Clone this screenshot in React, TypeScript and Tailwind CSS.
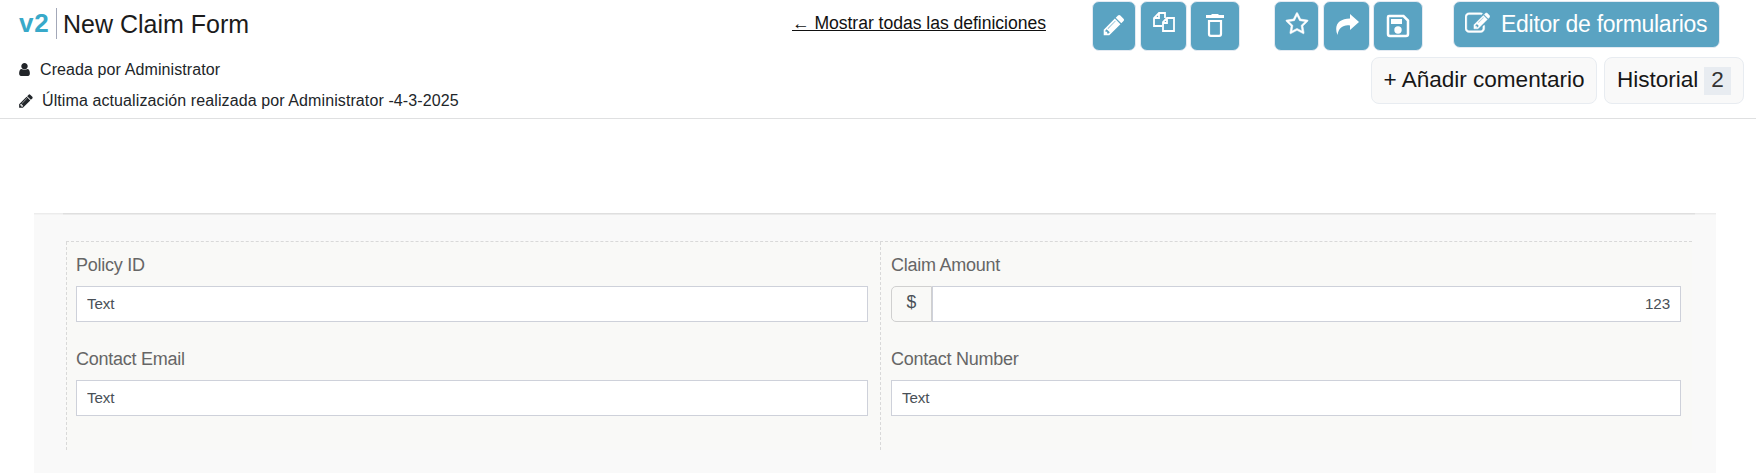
import type { ReactNode } from 'react';

const PENCIL =
  'M491 1536l91-91-235-235-91 91v107h128v128h107zm523-928q0-22-22-22-10 0-17 7l-542 542q-7 7-7 17 0 22 22 22 10 0 17-7l542-542q7-7 7-17zm-54-192l416 416-832 832h-416v-416zm683 96q0 53-37 90l-166 166-416-416 166-165q36-38 90-38 53 0 91 38l235 234q37 39 37 91z';
const USER =
  'M1536 1399q0 109-62.5 187t-150.5 78h-854q-88 0-150.5-78t-62.5-187q0-85 8.5-160.5t31.5-152 58.5-131 94-89 134.5-34.5q131 128 313 128t313-128q76 0 134.5 34.5t94 89 58.5 131 31.5 152 8.5 160.5zm-256-887q0 159-112.5 271.5t-271.5 112.5-271.5-112.5-112.5-271.5 112.5-271.5 271.5-112.5 271.5 112.5 112.5 271.5z';
const STAR =
  'M1201 1004l306-297-422-62-189-382-189 382-422 62 306 297-73 421 378-199 377 199zm527-357q0 22-26 48l-363 354 86 500q1 7 1 20 0 50-41 50-19 0-40-12l-449-236-449 236q-22 12-40 12-21 0-31.5-14.5t-10.5-35.5q0-6 2-20l86-500-364-354q-25-27-25-48 0-37 56-46l502-73 225-455q19-41 49-41t49 41l225 455 502 73q56 9 56 46z';
const EDIT =
  'M888 1184l116-116-152-152-116 116v56h96v96h56zm440-720q-16-16-33 1l-350 350q-17 17-1 33t33-1l350-350q17-17 1-33zm80 594v190q0 119-84.5 203.5t-203.5 84.5h-832q-119 0-203.5-84.5t-84.5-203.5v-832q0-119 84.5-203.5t203.5-84.5h832q63 0 117 25 15 7 18 23 3 17-9 29l-49 49q-14 14-32 8-23-6-45-6h-832q-66 0-113 47t-47 113v832q0 66 47 113t113 47h832q66 0 113-47t47-113v-126q0-13 9-22l64-64q15-15 35-7t20 29zm-96-738l288 288-672 672h-288v-288zm444 132l-92 92-288-288 92-92q28-28 68-28t68 28l152 152q28 28 28 68t-28 68z';

function Glyph({ d, className }: { d: string; className: string }) {
  return (
    <svg viewBox="0 0 1792 1792" fill="currentColor" className={className}>
      <path d={d} />
    </svg>
  );
}

function ToolButton({ className, children }: { className: string; children: ReactNode }) {
  return (
    <button
      className={`flex h-[50px] shrink-0 justify-center rounded-[7px] border border-[#e3eaf2] bg-[#5aa3c2] text-white ${className}`}
    >
      {children}
    </button>
  );
}

function Field({ label, children }: { label: string; children: ReactNode }) {
  return (
    <div className="flex h-[94px] flex-col">
      <label className="h-[34px] whitespace-nowrap text-[18px] leading-[26px] tracking-[-0.26px] text-[#666]">{label}</label>
      {children}
    </div>
  );
}

const inputClass = 'h-9 w-full min-w-0 border border-[#ced1da] bg-white px-[10px] pb-px text-[15.2px] tracking-[-0.1px] text-[#495057] outline-none';

export default function App() {
  return (
    <div className="h-[473px] w-[1756px] overflow-hidden bg-white font-['Liberation_Sans',Arial,sans-serif] text-[#212529]">
      <header className="flex h-[119px] border-b border-[#dfe0e1]">
        <div className="w-[791px] shrink-0 pl-[19px] pt-2">
          <div className="flex h-[31px] items-center">
            <span className="w-[37px] text-[26px] font-bold leading-[31px] tracking-[0.8px] text-[#38a9c9]">v2</span>
            <h1 className="h-[31px] whitespace-nowrap border-l border-[#a3a8b8] pl-[6px] text-[25px] leading-[32px] text-[#1b1b1b]">
              New Claim Form
            </h1>
          </div>
          <div className="mt-[19px] flex h-[23px] items-center whitespace-nowrap text-[16px] tracking-[0.1px]">
            <Glyph d={USER} className="mr-[6px] -ml-[2px] h-[15px] w-[15px]" />
            <span className="ml-[2px]">Creada por Administrator</span>
          </div>
          <div className="mt-2 flex h-[23px] items-center whitespace-nowrap text-[16px] tracking-[0.1px]">
            <Glyph d={PENCIL} className="-ml-px mr-[8px] h-4 w-4" />
            <span>Última actualización realizada por Administrator -4-3-2025</span>
          </div>
        </div>

        <div className="flex w-[965px] flex-col">
          <div className="flex h-[56px] items-start pt-px">
            <a className="mt-[10px] w-[301px] shrink-0 whitespace-nowrap pl-px text-[17.6px] leading-6 tracking-[-0.04px] text-[#111] underline">
              ← Mostrar todas las definiciones
            </a>
            <ToolButton className="mr-[4px] w-[44px]">
              <Glyph d={PENCIL} className="mt-[11px] h-6 w-6" />
            </ToolButton>
            <ToolButton className="mr-[3px] w-[47px]">
              <svg viewBox="0 0 22 20" className="mt-[10px] h-5 w-[22px]" fill="none" stroke="currentColor" strokeWidth="1.800">
                <path d="M9 14H1V6l5-5h6v5M6 1v5H1" />
                <path d="M14 6h7v13H10v-9zM14 6v5h-4" />
              </svg>
            </ToolButton>
            <ToolButton className="mr-[34px] w-[50px]">
              <svg viewBox="0 0 18 24" className="mt-3 h-6 w-[18px]" fill="currentColor">
                <path d="M6 0h6l1 1h5v3H0V1h5z" />
                <path d="M3 7h12v13q0 1.8-1.8 1.8H4.800Q3 21.800 3 20z" fill="none" stroke="currentColor" strokeWidth="2.200" />
              </svg>
            </ToolButton>
            <ToolButton className="mr-[4px] w-[45px]">
              <Glyph d={STAR} className="mt-[10px] h-6 w-6 stroke-white stroke-[40]" />
            </ToolButton>
            <ToolButton className="mr-[3px] w-[47px]">
              <svg viewBox="0 0 24 22" className="mt-3 h-[22px] w-6" fill="currentColor">
                <path d="M15 0l9 8-9 8v-4.500C8 10.600 3.700 14 2.500 21C-1.500 11 4 4.600 15 4.500z" />
              </svg>
            </ToolButton>
            <ToolButton className="mr-[30px] w-[50px]">
              <svg viewBox="0 0 24 24" className="mt-3 h-6 w-6" fill="none" stroke="currentColor" strokeWidth="2.500">
                <path d="M3 2h14.500L22 6.500V20q0 2-2 2H4q-2 0-2-2V3q0-1 1-1z" />
                <path d="M5 5h11v5H5z" fill="currentColor" stroke="none" />
                <circle cx="12" cy="16" r="3.700" fill="currentColor" stroke="none" />
              </svg>
            </ToolButton>
            <button className="flex h-[47px] w-[267px] shrink-0 items-center whitespace-nowrap rounded-[7px] border border-[#e3eaf2] bg-[#5aa3c2] pl-[11px] text-[23px] tracking-[-0.28px] text-white">
              <Glyph d={EDIT} className="mr-[11px] h-[25px] w-[25px] -translate-y-px stroke-white stroke-[30]" />
              <span>Editor de formularios</span>
            </button>
          </div>
          <div className="mt-[1px] flex justify-end gap-[7px] pr-3 text-[22.600px] tracking-[-0.03px] text-[#171717]">
            <button className="h-[47px] w-[226px] whitespace-nowrap rounded-lg border border-[#e8ecf1] bg-[#f9f9f9] pb-px">+ Añadir comentario</button>
            <button className="flex h-[47px] w-[140px] items-center whitespace-nowrap rounded-lg border border-[#e8ecf1] bg-[#f9f9f9] pl-3">
              <span className="w-[87px] pb-px text-left">Historial</span>
              <span className="flex h-7 w-[27px] items-center justify-center bg-[#e8ecf1] pb-px text-[#333]">2</span>
            </button>
          </div>
        </div>
      </header>

      <main className="ml-[34px] mt-[94px] h-[260px] w-[1682px] bg-[#f9f9f9]">
        <div className="h-0.5 border-t border-[#ececec] bg-[#f3f3f3] pl-[29px]">
          <div className="-mt-px h-0.5 w-[1632px] border-t border-[#dfdfdf] bg-[#ebebeb]" />
        </div>
        <div className="ml-8 mt-[26px] grid h-[209px] w-[1626px] grid-cols-[814px_812px] border-t border-dashed border-[#d9d9d9] bg-[#f9f9f7]">
          <section className="border-l border-dashed border-[#d9d9d9] pl-[9px] pr-[12px] pt-[10px]">
            <Field label="Policy ID">
              <input className={inputClass} defaultValue="Text" />
            </Field>
            <Field label="Contact Email">
              <input className={inputClass} defaultValue="Text" />
            </Field>
          </section>
          <section className="border-l border-dashed border-[#d9d9d9] pl-[10px] pr-[11px] pt-[10px]">
            <Field label="Claim Amount">
              <div className="flex">
                <span className="flex h-9 w-[41px] shrink-0 items-center justify-center rounded-l-[5px] border border-[#d0d0d0] pb-[3px] text-[17.600px] text-[#495057]">
                  $
                </span>
                <input className={`${inputClass} text-right`} defaultValue="123" />
              </div>
            </Field>
            <Field label="Contact Number">
              <input className={inputClass} defaultValue="Text" />
            </Field>
          </section>
        </div>
      </main>
    </div>
  );
}
